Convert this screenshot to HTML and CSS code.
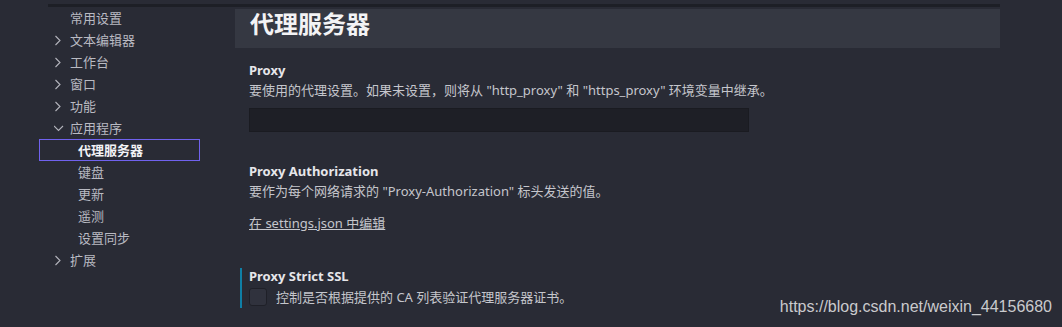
FILE: index.html
```html
<!DOCTYPE html>
<html lang="zh-CN">
<head>
  <meta charset="UTF-8">
  <title>设置 - 代理服务器</title>
  <link rel="stylesheet" href="styles.css">
</head>
<body>
  <div class="scroll-shadow"></div>

  <div class="editor">
    <!-- 左侧目录树 -->
    <nav class="toc">
      <div class="toc-row toc-top">常用设置</div>
      <div class="toc-row toc-top">
        <svg class="chevron" viewBox="0 0 16 16"><path d="M1.5 4 L6 8.5 L1.5 13"/></svg>文本编辑器
      </div>
      <div class="toc-row toc-top">
        <svg class="chevron" viewBox="0 0 16 16"><path d="M1.5 4 L6 8.5 L1.5 13"/></svg>工作台
      </div>
      <div class="toc-row toc-top">
        <svg class="chevron" viewBox="0 0 16 16"><path d="M1.5 4 L6 8.5 L1.5 13"/></svg>窗口
      </div>
      <div class="toc-row toc-top">
        <svg class="chevron" viewBox="0 0 16 16"><path d="M1.5 4 L6 8.5 L1.5 13"/></svg>功能
      </div>
      <div class="toc-row toc-top">
        <svg class="chevron" viewBox="0 0 16 16"><path d="M0 6 L4.5 10.5 L9 6"/></svg>应用程序
      </div>
      <div class="toc-row toc-child selected">代理服务器</div>
      <div class="toc-row toc-child">键盘</div>
      <div class="toc-row toc-child">更新</div>
      <div class="toc-row toc-child">遥测</div>
      <div class="toc-row toc-child">设置同步</div>
      <div class="toc-row toc-top">
        <svg class="chevron" viewBox="0 0 16 16"><path d="M1.5 4 L6 8.5 L1.5 13"/></svg>扩展
      </div>
    </nav>

    <!-- 设置内容 -->
    <main class="settings">
      <div class="settings-header">代理服务器</div>

      <div class="setting setting-proxy">
        <div class="setting-title">Proxy</div>
        <div class="setting-desc">要使用的代理设置。如果未设置，则将从 "http_proxy" 和 "https_proxy" 环境变量中继承。</div>
        <div class="text-input"></div>
      </div>

      <div class="setting setting-auth">
        <div class="setting-title">Proxy Authorization</div>
        <div class="setting-desc">要作为每个网络请求的 "Proxy-Authorization" 标头发送的值。</div>
        <a class="edit-link" href="#">在 settings.json 中编辑</a>
      </div>

      <div class="setting setting-ssl focused">
        <div class="setting-title">Proxy Strict SSL</div>
        <div class="checkbox-row">
          <span class="checkbox"></span>
          <span class="setting-desc">控制是否根据提供的 CA 列表验证代理服务器证书。</span>
        </div>
      </div>
    </main>
  </div>

  <div class="watermark">https://blog.csdn.net/weixin_44156680</div>
</body>
</html>
```

FILE: styles.css
```css
body {
  margin: 0;
  padding-top: 4px;
  background-color: #292b35;
  color: #c5c6cc;
  font-family: "Noto Sans", "Noto Sans CJK SC", sans-serif;
  font-size: 13px;
  height: 327px;
  overflow: hidden;
  position: relative;
}

.scroll-shadow {
  height: 3px;
  margin: 0 62px 0 48px;
  background-color: #1d1f26;
}

.editor {
  display: flex;
}

/* 目录树 */
.toc {
  width: 196px;
  padding-left: 39px;
}

.toc-row {
  height: 22px;
  line-height: 22px;
  width: 161px;
  box-sizing: border-box;
  display: flex;
  align-items: center;
  color: #b9bac2;
  white-space: nowrap;
}

.toc-top {
  padding-left: 31px;
}

.toc-top .chevron {
  margin-left: -16px;
}

.toc-child {
  padding-left: 39px;
}

.chevron {
  width: 16px;
  height: 16px;
  flex: none;
  fill: none;
  stroke: #b3b4bc;
  stroke-width: 1.1;
}

.toc-row.selected {
  border: 1px solid #7062ee;
  padding-left: 38px;
  color: #f2f2f5;
  font-weight: bold;
}

/* 设置区 */
.settings {
  width: 765px;
}

.settings-header {
  margin-top: 2px;
  height: 39px;
  line-height: 29px;
  padding-left: 15px;
  background-color: #353842;
  color: #f3f3f5;
  font-size: 24px;
  font-weight: bold;
}

.setting {
  margin-left: 5px;
  border-left: 2px solid transparent;
  padding-left: 7px;
}

.setting.focused {
  border-left-color: #0f7fa6;
}

.setting-title {
  font-weight: bold;
  line-height: 20px;
  color: #e6e6ea;
}

.setting-desc {
  line-height: 20px;
}

.setting-proxy {
  margin-top: 12px;
}

.text-input {
  margin-top: 8px;
  width: 500px;
  height: 24px;
  box-sizing: border-box;
  background-color: #1e1f26;
  border: 1px solid #1a1b21;
}

.setting-auth {
  margin-top: 29px;
}

.edit-link {
  display: inline-block;
  margin-top: 12px;
  line-height: 20px;
  color: #c5c6cc;
  text-decoration: underline;
}

.setting-ssl {
  margin-top: 35px;
  padding-bottom: 2px;
}

.setting-ssl .setting-title {
  line-height: 16px;
}

.checkbox-row {
  margin-top: 4px;
  display: flex;
  align-items: center;
  gap: 9px;
  height: 18px;
}

.checkbox {
  width: 18px;
  height: 18px;
  box-sizing: border-box;
  border-radius: 3px;
  background-color: #30323d;
  border: 1px solid #1f2028;
}

/* 水印 */
.watermark {
  position: absolute;
  right: 10px;
  top: 298px;
  font-family: "Liberation Sans", Arial, sans-serif;
  font-size: 16px;
  color: #c9cacd;
}
```
